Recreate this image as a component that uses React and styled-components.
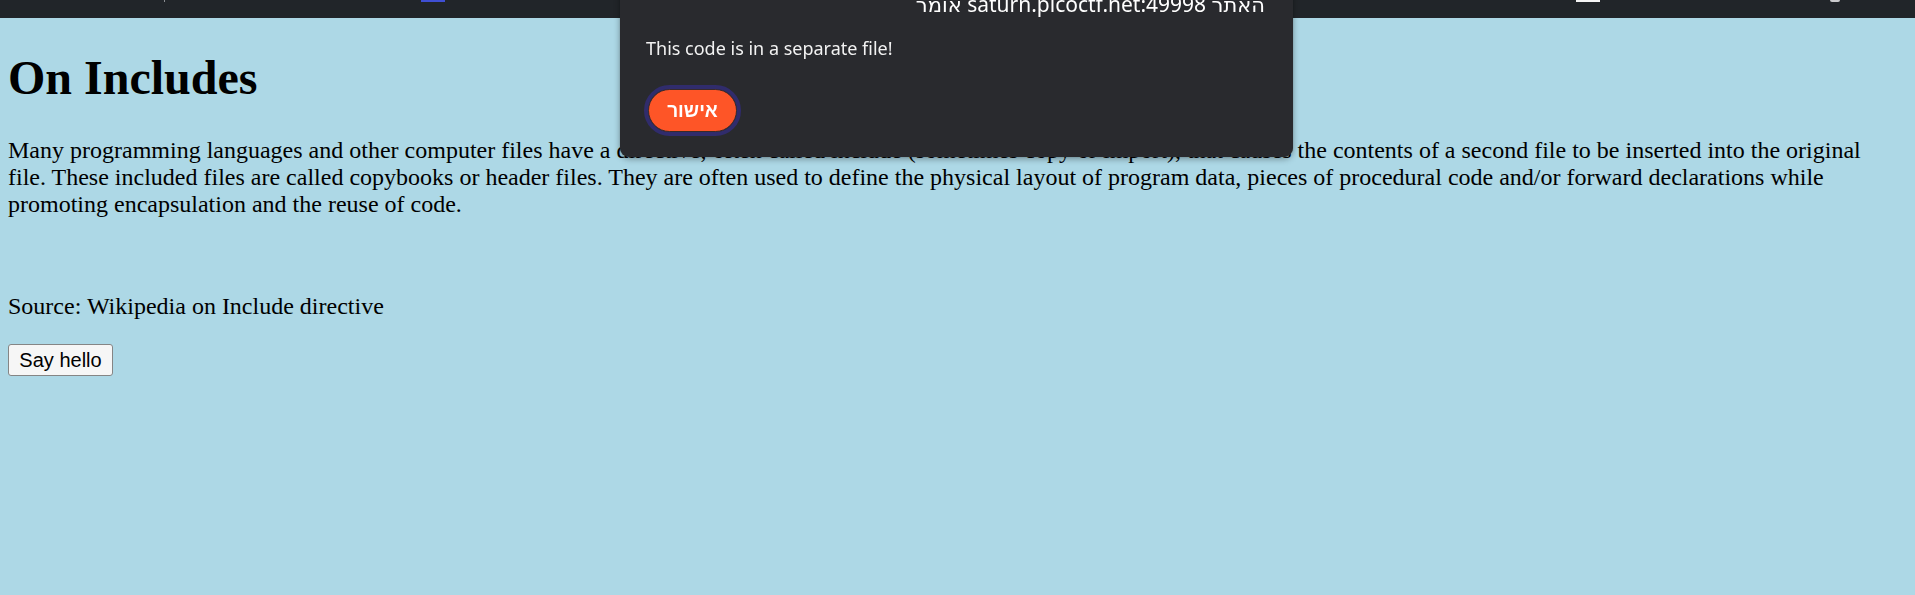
import React from "react";
import styled, { createGlobalStyle } from "styled-components";

const Global = createGlobalStyle`
  html, body {
    margin: 0;
    padding: 0;
    background: #add8e6;
  }
  body {
    font-family: "Liberation Serif", "Times New Roman", serif;
    color: #000;
    overflow: hidden;
  }
`;

const ChromeStrip = styled.div`
  height: 18px;
  background: #212529;
  display: grid;
  grid-template-columns: 164px 1px 256px 24px 1131px 24px 230px 10px 1fr;
  align-items: start;
`;

const IconCut = styled.span`
  grid-column: ${(p) => p.$col};
  height: ${(p) => p.$h}px;
  background: ${(p) => p.$color};
  border-radius: 0 0 ${(p) => p.$r || 0}px ${(p) => p.$r || 0}px;
`;

const Page = styled.main`
  padding: 0 20px 0 8px;
  font-size: 24px;
`;

const Heading = styled.h1`
  font-size: 48px;
  font-weight: bold;
  margin: 32px 0;
`;

const Para = styled.p`
  font-size: 24px;
  margin: 24px 0;
`;

const HelloButton = styled.button`
  font-family: "Liberation Sans", Arial, sans-serif;
  font-size: 20px;
  width: 105px;
  height: 32px;
  padding: 0;
  background: #f6f6f6;
  border: 1px solid #858585;
  border-radius: 3px;
  color: #000;
`;

const Dialog = styled.div`
  position: fixed;
  left: 620px;
  top: -20px;
  width: 673px;
  box-sizing: border-box;
  padding: 10px 28px 25px 26px;
  background: #292a2e;
  border-radius: 9px;
  box-shadow: 0 2px 6px rgba(0, 0, 0, 0.35), 0 0 1px rgba(0, 0, 0, 0.4);
  color: #fff;
  font-family: "Noto Sans", "DejaVu Sans", "Liberation Sans", sans-serif;
  display: flex;
  flex-direction: column;
  align-items: flex-start;
`;

const DialogTitle = styled.div`
  align-self: stretch;
  direction: rtl;
  text-align: right;
  font-size: 21px;
  line-height: 28px;
`;

const DialogMessage = styled.div`
  margin-top: 18px;
  font-size: 18px;
  line-height: 24px;
  color: #f2f2f2;
`;

const OkButton = styled.button`
  margin-top: 29px;
  margin-left: 2px;
  width: 89px;
  height: 43px;
  border-radius: 22px;
  border: 1px solid #3a2a2a;
  background: #fe5527;
  color: #fff;
  font-family: "Liberation Sans", "DejaVu Sans", sans-serif;
  font-size: 19px;
  font-weight: 600;
  outline: 4px solid #302c6c;
  outline-offset: 0;
  padding: 0;
`;

export default function App() {
  return (
    <>
      <Global />
      <ChromeStrip>
        <IconCut $col={2} $h={2} $color="#8a8d91" />
        <IconCut $col={4} $h={2} $color="#3f4fd3" />
        <IconCut $col={6} $h={2} $color="#f4f4f4" />
        <IconCut $col={8} $h={2} $color="#c9cacc" $r={3} />
      </ChromeStrip>
      <Page>
        <Heading>On Includes</Heading>
        <Para>
          Many programming languages and other computer files have a directive,
          often called include (sometimes copy or import), that causes the
          contents of a second file to be inserted into the original file. These
          included files are called copybooks or header files. They are often
          used to define the physical layout of program data, pieces of
          procedural code and/or forward declarations while promoting
          encapsulation and the reuse of code.
        </Para>
        <br />
        <Para>Source: Wikipedia on Include directive</Para>
        <HelloButton type="button">Say hello</HelloButton>
      </Page>
      <Dialog role="alertdialog">
        <DialogTitle>האתר saturn.picoctf.net:49998 אומר</DialogTitle>
        <DialogMessage>This code is in a separate file!</DialogMessage>
        <OkButton type="button">אישור</OkButton>
      </Dialog>
    </>
  );
}
